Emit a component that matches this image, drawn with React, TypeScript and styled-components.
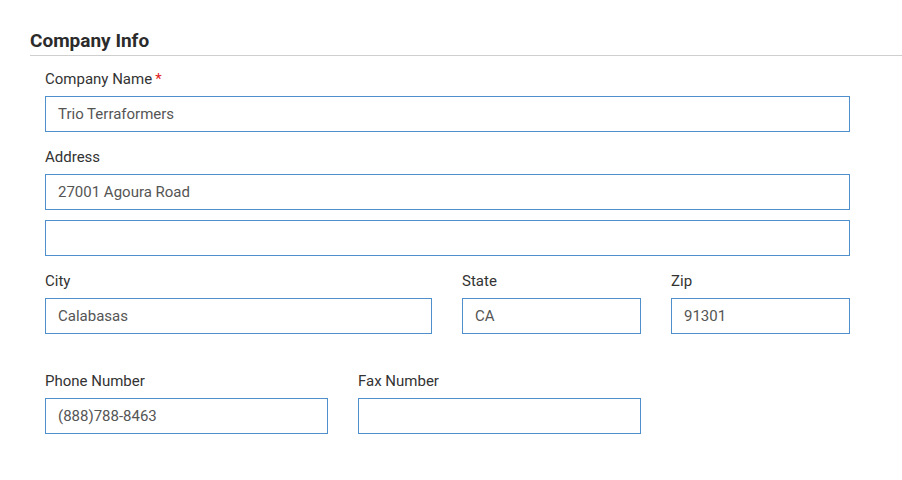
import React from "react";
import styled, { createGlobalStyle } from "styled-components";

const G = createGlobalStyle`
  body { margin: 0; background: #fff; font-family: Roboto, "Liberation Sans", sans-serif; }
`;
const Page = styled.div`padding: 28px 0 0 30px;`;
const Title = styled.h2`
  margin: 0; font-size: 19px; font-weight: 700; color: #2b2b2b;
  line-height: 26px; padding-bottom: 1px; border-bottom: 1px solid #cfcfcf;
`;
const Body = styled.div`padding: 14px 0 0 15px; width: 805px;`;
const Row = styled.div<{ cols: string; mt?: number }>`
  display: grid; grid-template-columns: ${p => p.cols}; column-gap: 30px;
  margin-top: ${p => p.mt ?? 0}px;
`;
const Label = styled.div`
  font-size: 15px; color: #333; line-height: 18px; margin-bottom: 8px;
`;
const Req = styled.span`color: #e02020; margin-left: 3px;`;
const Input = styled.input<{ mt?: number }>`
  box-sizing: border-box; width: 100%; height: 36px; display: block;
  border: 1px solid #4f8fcc; padding: 0 12px; margin-top: ${p => p.mt ?? 0}px;
  font-family: Roboto, "Liberation Sans", sans-serif; font-size: 15px; color: #555;
  outline: none;
`;
const Field = styled.div``;

export default function App() {
  return (
    <Page>
      <G />
      <Title>Company Info</Title>
      <Body>
        <Row cols="1fr">
          <Field><Label>Company Name<Req>*</Req></Label><Input defaultValue="Trio Terraformers" /></Field>
        </Row>
        <Row cols="1fr" mt={16}>
          <Field><Label>Address</Label><Input defaultValue="27001 Agoura Road" /><Input mt={10} /></Field>
        </Row>
        <Row cols="387px 179px 179px" mt={16}>
          <Field><Label>City</Label><Input defaultValue="Calabasas" /></Field>
          <Field><Label>State</Label><Input defaultValue="CA" /></Field>
          <Field><Label>Zip</Label><Input defaultValue="91301" /></Field>
        </Row>
        <Row cols="283px 283px" mt={38}>
          <Field><Label>Phone Number</Label><Input defaultValue="(888)788-8463" /></Field>
          <Field><Label>Fax Number</Label><Input /></Field>
        </Row>
      </Body>
    </Page>
  );
}
